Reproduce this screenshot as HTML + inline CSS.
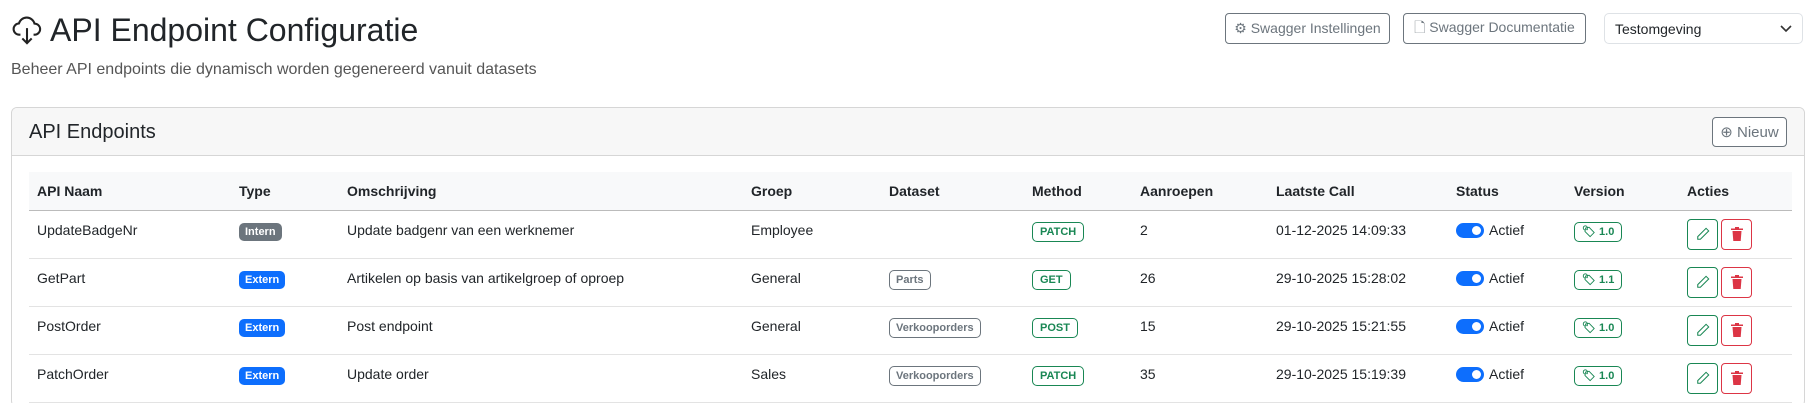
<!DOCTYPE html>
<html style="height:403px;overflow:hidden"><head><meta charset="utf-8"><style>
*{box-sizing:border-box;margin:0;padding:0}
body{width:1810px;height:403px;overflow:hidden;background:#fff;font-family:"Liberation Sans",Arial,sans-serif;color:#212529;position:relative}
.abs{position:absolute}
h1{position:absolute;left:50px;top:11px;font-size:32px;font-weight:400;line-height:38px}
.sub{left:11px;top:61px;font-size:16px;color:#555}
.btn{position:absolute;border:1px solid #6c757d;border-radius:4px;color:#6c757d;font-size:14px;display:flex;align-items:center;justify-content:center;gap:4px;background:#fff}
.sel{left:1604px;top:13px;width:199px;height:31px;border:1px solid #dee2e6;border-radius:5px;font-size:14px;padding:0 10px;display:flex;align-items:center;justify-content:space-between}
.card{left:11px;top:107px;width:1794px;height:300px;border:1px solid #d6d6d6;border-radius:6px;overflow:hidden}
.ch{height:48px;background:#f7f7f7;border-bottom:1px solid #d6d6d6;font-size:20px;padding:14px 17px;line-height:20px}
table{position:absolute;left:17px;top:64px;border-collapse:collapse;table-layout:fixed;width:1763px;font-size:14px}
th{background:#f8f9fa;height:38px;text-align:left;padding:0 8px;font-weight:700;border-bottom:1px solid #bbb}
td{height:48px;padding:11px 8px 0;border-bottom:1px solid #e3e3e3;vertical-align:top;line-height:16px}
.b{display:inline-block;font-size:11px;font-weight:700;border-radius:5px;padding:3px 6px;line-height:12px}
.gi{background:#6c757d;color:#fff}.bl{background:#0d6efd;color:#fff}
.gr{border:1px solid #198754;color:#198754;padding:3px 7px}
.ds{border:1px solid #6c757d;color:#6c757d;font-weight:700}
.tg{display:inline-block;width:28px;height:15px;background:#0d6efd;border-radius:8px;position:relative;vertical-align:middle;margin-right:5px}
.tg:after{content:"";position:absolute;right:3px;top:3px;width:9px;height:9px;border-radius:50%;background:#fff}
.ab{display:inline-flex;align-items:center;justify-content:center;width:31px;height:31px;border-radius:4px;vertical-align:top;margin-right:3px}
.e{border:1px solid #198754}.d{border:1px solid #dc3545}
td.a{padding-top:8px}
</style></head><body>
<svg class="abs" style="left:11px;top:15px" width="32" height="30" viewBox="0 0 16 16" fill="none" stroke="#222" stroke-width="1.1"><path d="M4.5 10.5H4a3 3 0 0 1-.3-6A4.3 4.3 0 0 1 12 4.6a2.9 2.9 0 0 1 .1 5.9h-.6"/><path d="M8 7v8M5.5 12.5 8 15l2.5-2.5"/></svg>
<h1>API Endpoint Configuratie</h1>
<div class="abs sub">Beheer API endpoints die dynamisch worden gegenereerd vanuit datasets</div>
<div class="btn" style="left:1225px;top:13px;width:165px;height:31px">⚙ Swagger Instellingen</div>
<div class="btn" style="left:1403px;top:13px;width:183px;height:31px">🗋 Swagger Documentatie</div>
<div class="abs sel">Testomgeving<svg width="12" height="8" viewBox="0 0 12 8"><path d="M1 1l5 5 5-5" stroke="#333" stroke-width="1.6" fill="none"/></svg></div>
<div class="abs card">
<div class="ch">API Endpoints</div>
<div class="btn" style="left:1700px;top:9px;width:75px;height:30px;font-size:15px">⊕ Nieuw</div>
<table>
<colgroup><col style="width:202px"><col style="width:108px"><col style="width:404px"><col style="width:138px"><col style="width:143px"><col style="width:108px"><col style="width:136px"><col style="width:180px"><col style="width:118px"><col style="width:113px"><col style="width:113px"></colgroup>
<tr><th>API Naam</th><th>Type</th><th>Omschrijving</th><th>Groep</th><th>Dataset</th><th>Method</th><th>Aanroepen</th><th>Laatste Call</th><th>Status</th><th>Version</th><th>Acties</th></tr>
<tr><td>UpdateBadgeNr</td><td><span class="b gi">Intern</span></td><td>Update badgenr van een werknemer</td><td>Employee</td><td></td><td><span class="b gr">PATCH</span></td><td>2</td><td>01-12-2025 14:09:33</td><td><span class="tg"></span>Actief</td><td><span class="b gr">🏷 1.0</span></td><td class="a"><span class="ab e"><svg width="14" height="14" viewBox="0 0 16 16" fill="none" stroke="#198754" stroke-width="1.2"><path d="M11.5 1.5l3 3L5 14H2v-3z"/></svg></span><span class="ab d"><svg width="12" height="14" viewBox="0 0 12 14" fill="#dc3545"><rect x="0" y="1.5" width="12" height="1.5"/><rect x="4" y="0" width="4" height="2"/><path d="M1.5 4h9l-.8 10H2.3z"/></svg></span></td></tr>
<tr><td>GetPart</td><td><span class="b bl">Extern</span></td><td>Artikelen op basis van artikelgroep of oproep</td><td>General</td><td><span class="b ds">Parts</span></td><td><span class="b gr">GET</span></td><td>26</td><td>29-10-2025 15:28:02</td><td><span class="tg"></span>Actief</td><td><span class="b gr">🏷 1.1</span></td><td class="a"><span class="ab e"><svg width="14" height="14" viewBox="0 0 16 16" fill="none" stroke="#198754" stroke-width="1.2"><path d="M11.5 1.5l3 3L5 14H2v-3z"/></svg></span><span class="ab d"><svg width="12" height="14" viewBox="0 0 12 14" fill="#dc3545"><rect x="0" y="1.5" width="12" height="1.5"/><rect x="4" y="0" width="4" height="2"/><path d="M1.5 4h9l-.8 10H2.3z"/></svg></span></td></tr>
<tr><td>PostOrder</td><td><span class="b bl">Extern</span></td><td>Post endpoint</td><td>General</td><td><span class="b ds">Verkooporders</span></td><td><span class="b gr">POST</span></td><td>15</td><td>29-10-2025 15:21:55</td><td><span class="tg"></span>Actief</td><td><span class="b gr">🏷 1.0</span></td><td class="a"><span class="ab e"><svg width="14" height="14" viewBox="0 0 16 16" fill="none" stroke="#198754" stroke-width="1.2"><path d="M11.5 1.5l3 3L5 14H2v-3z"/></svg></span><span class="ab d"><svg width="12" height="14" viewBox="0 0 12 14" fill="#dc3545"><rect x="0" y="1.5" width="12" height="1.5"/><rect x="4" y="0" width="4" height="2"/><path d="M1.5 4h9l-.8 10H2.3z"/></svg></span></td></tr>
<tr><td>PatchOrder</td><td><span class="b bl">Extern</span></td><td>Update order</td><td>Sales</td><td><span class="b ds">Verkooporders</span></td><td><span class="b gr">PATCH</span></td><td>35</td><td>29-10-2025 15:19:39</td><td><span class="tg"></span>Actief</td><td><span class="b gr">🏷 1.0</span></td><td class="a"><span class="ab e"><svg width="14" height="14" viewBox="0 0 16 16" fill="none" stroke="#198754" stroke-width="1.2"><path d="M11.5 1.5l3 3L5 14H2v-3z"/></svg></span><span class="ab d"><svg width="12" height="14" viewBox="0 0 12 14" fill="#dc3545"><rect x="0" y="1.5" width="12" height="1.5"/><rect x="4" y="0" width="4" height="2"/><path d="M1.5 4h9l-.8 10H2.3z"/></svg></span></td></tr>
</table>
</div>
</body></html>
